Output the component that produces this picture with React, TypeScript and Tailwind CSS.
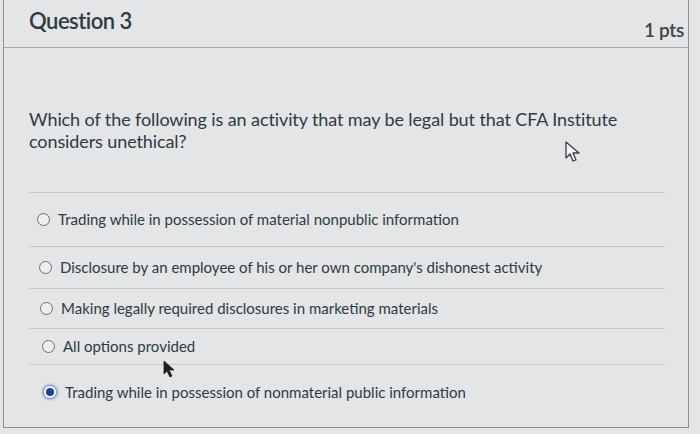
import React from 'react';

const options = [
  { label: 'Trading while in possession of material nonpublic information', checked: false, row: 'h-[54px] pl-[8px]' },
  { label: "Disclosure by an employee of his or her own company's dishonest activity", checked: false, row: 'h-[42px] pl-[10px]' },
  { label: 'Making legally required disclosures in marketing materials', checked: false, row: 'h-[40px] pl-[11px]' },
  { label: 'All options provided', checked: false, row: 'h-[36px] pl-[13px]' },
  { label: 'Trading while in possession of nonmaterial public information', checked: true, row: 'h-[54px] pl-[14px]' },
];

function Radio({ checked }: { checked: boolean }) {
  if (checked) {
    return (
      <span className="flex h-[14px] w-[14px] shrink-0 items-center justify-center rounded-full border-[1.5px] border-[#7f95d6] bg-white shadow-[0_0_2px_1px_rgba(70,110,220,0.45)]">
        <span className="h-[8px] w-[8px] rounded-full bg-[#1b3ea8]" />
      </span>
    );
  }
  return <span className="h-[13px] w-[13px] shrink-0 rounded-full border-[1.5px] border-[#6b7075] bg-[#eceeef]" />;
}

export default function App() {
  return (
    <div className="relative h-[434px] w-[700px] overflow-hidden bg-[#e3e5e6] font-['Lato',sans-serif] text-[#2d3b45]">
      <div className="ml-[3px] mr-[11px] h-[428px] border-x border-b border-[#8d9195]">
        {/* header */}
        <div className="flex h-[48px] items-start justify-between border-b border-[#a3a7ab] pl-[25px] pr-[4px]">
          <h2 className="mt-[4px] text-[22px] font-semibold tracking-[-0.5px] text-[#2d3b45]">Question 3</h2>
          <span className="mt-[16px] text-[19px] font-semibold tracking-[-0.3px] text-[#3d4449]">1 pts</span>
        </div>

        {/* body */}
        <div className="pl-[25px] pr-[23px]">
          <p className="mt-[60px] text-[18px] leading-[22px] tracking-[-0.1px] text-[#2d3b45]">
            Which of the following is an activity that may be legal but that CFA Institute
            <br />
            considers unethical?
          </p>

          <div className="mt-[40px] border-t border-[#c6c9cc]">
            {options.map((o, i) => (
              <div
                key={i}
                className={`flex items-center gap-[8px] ${o.row} ${i < options.length - 1 ? 'border-b border-[#c6c9cc]' : ''}`}
              >
                <Radio checked={o.checked} />
                <span className="text-[15px] tracking-[0px] text-[#2d3b45]">{o.label}</span>
              </div>
            ))}
          </div>
        </div>
      </div>

      {/* mouse pointers visible in the screenshot */}
      <svg className="absolute left-[564px] top-[140px]" width="20" height="24" viewBox="0 0 20 24">
        <path d="M2 2 L2 18 L6 14 L9 21 L12 20 L9 13 L15 13 Z" fill="#f4f5f6" stroke="#3a3f44" strokeWidth="1.3" strokeLinejoin="round" />
      </svg>
      <svg className="absolute left-[162px] top-[360px]" width="14" height="18" viewBox="0 0 14 18">
        <path d="M2 1 L2 14 L5 11 L8 17 L10 16 L7 10 L12 10 Z" fill="#1d1f22" stroke="#1d1f22" strokeWidth="0.8" strokeLinejoin="round" />
      </svg>
    </div>
  );
}
